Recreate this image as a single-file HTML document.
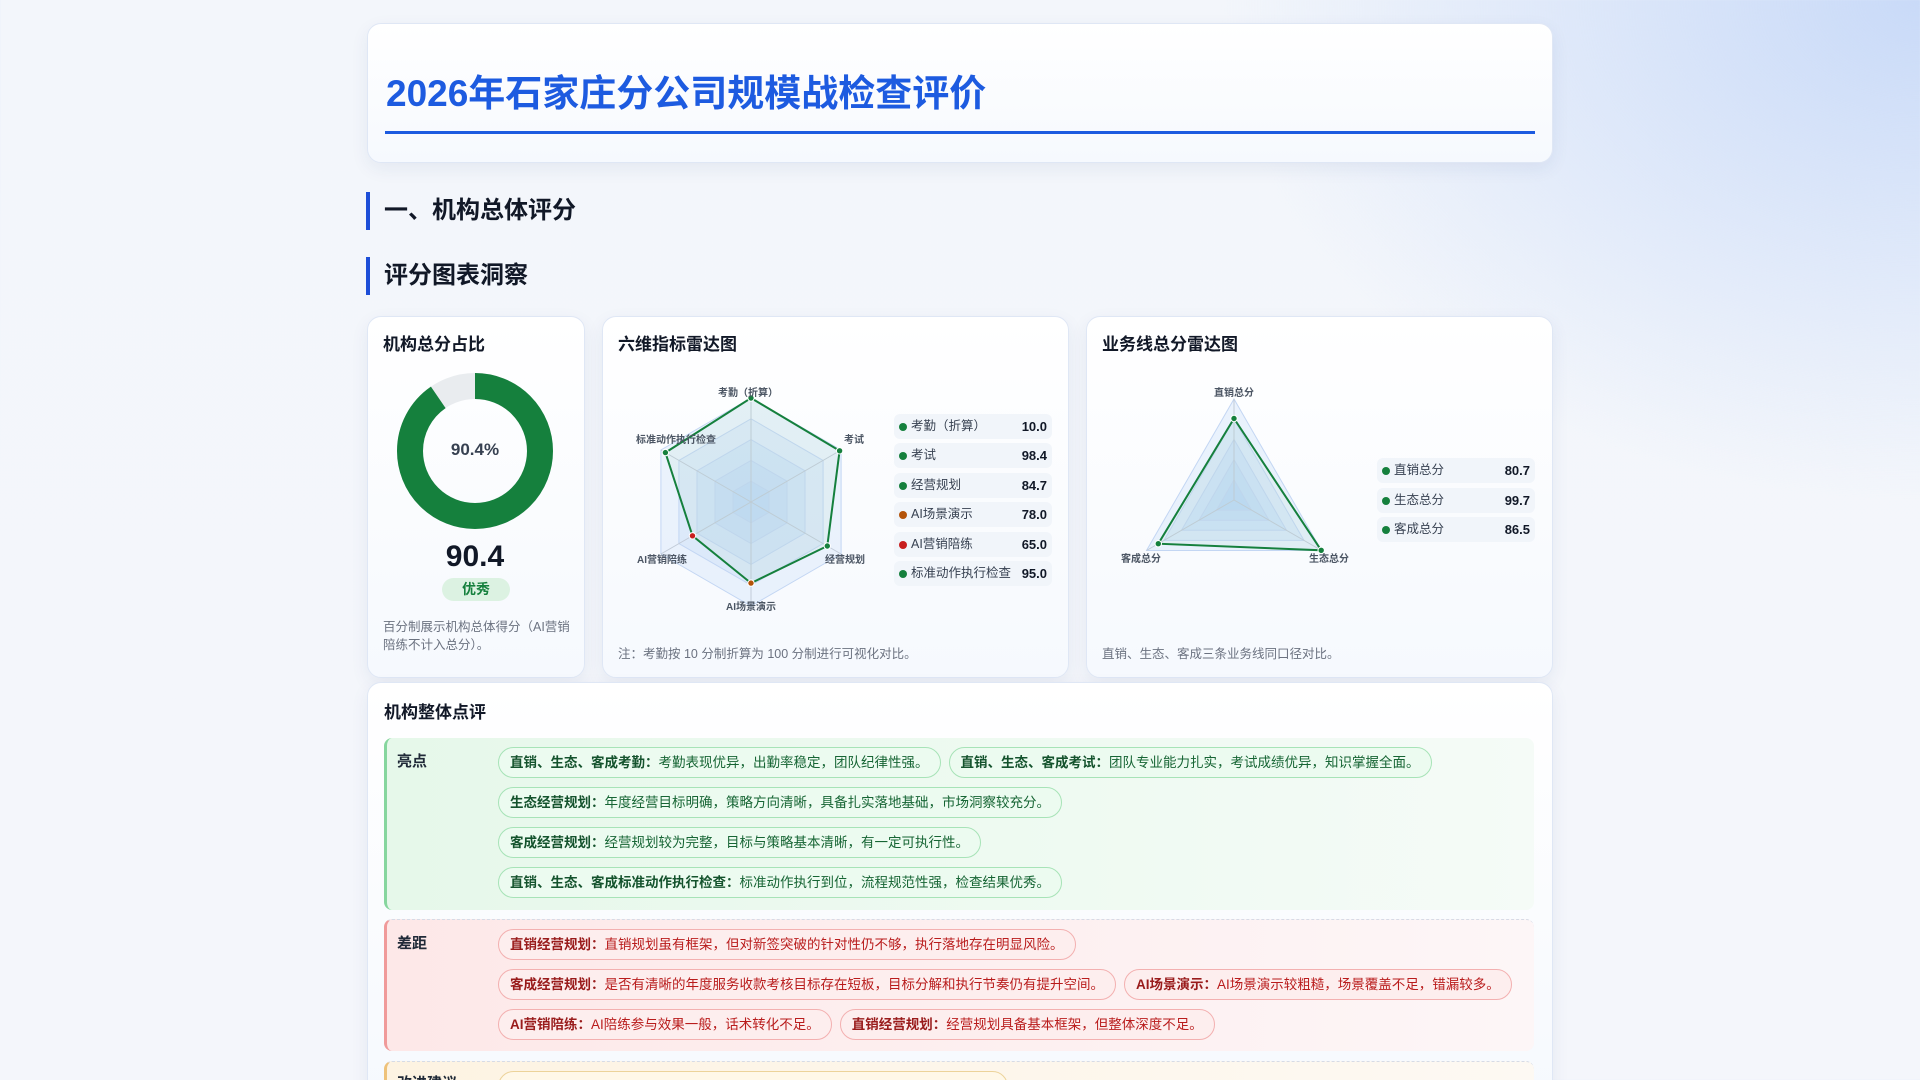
<!DOCTYPE html>
<html lang="zh">
<head>
<meta charset="utf-8">
<style>
*{margin:0;padding:0;box-sizing:border-box}
html,body{width:1920px;height:1080px;overflow:hidden}
body{font-family:"Liberation Sans","Noto Sans CJK SC",sans-serif;color:#1f2937;
background:radial-gradient(ellipse 700px 500px at 1920px 0px,#c9daf8 0%,rgba(201,218,248,0) 100%),linear-gradient(180deg,#f3f6fb 0%,#f4f6fb 100%);position:relative}
.abs{position:absolute}
.card{position:absolute;background:linear-gradient(180deg,#ffffff 0%,#f6f9fe 100%);border:1px solid #dfe7f5;border-radius:14px;box-shadow:0 6px 18px rgba(30,60,120,0.07)}
.ttl{position:absolute;font-size:17px;font-weight:bold;color:#111827}
.sec{position:absolute;left:366px;border-left:4px solid #1d4ed8;padding-left:14px;font-size:24px;font-weight:bold;color:#111827;height:38px;line-height:38px}
.leg{position:absolute;height:25px;background:#f1f5fa;border-radius:6px;font-size:12.5px;color:#374151;line-height:25px}
.leg i{position:absolute;left:5px;top:8.5px;width:8px;height:8px;border-radius:50%;background:#15803d}
.leg span{position:absolute;left:17px}
.leg b{position:absolute;right:5px;color:#111827;font-size:13px}
.note{position:absolute;font-size:12.5px;color:#6b7280;line-height:18px}
.blk{position:absolute;left:384px;width:1150px;border-radius:8px}
.lab{position:absolute;left:10px;font-size:15px;font-weight:bold;color:#1f2937}
.row{position:absolute;left:498px;display:flex;gap:8px}
.chip{height:31px;line-height:29px;border-radius:16px;padding:0 11px;font-size:13.5px;white-space:nowrap}
.g{background:#ecfbf0;border:1px solid #a7e3b7;color:#166534}
.g b{color:#14532d}
.r{background:#fdeeee;border:1px solid #f3b0b0;color:#b91c1c}
.r b{color:#991b1b}
.y{background:#fff8e8;border:1px solid #ecd39a;color:#92400e}
</style>
</head>
<body>

<div class="card" style="left:367px;top:23px;width:1186px;height:140px;"></div>
<div class="abs" style="left:386px;top:63px;font-size:37px;font-weight:bold;color:#1d5be0;">2026年石家庄分公司规模战检查评价</div>
<div class="abs" style="left:385px;top:131px;width:1150px;height:3px;background:#1d5be0;"></div>

<div class="sec" style="top:192px;">一、机构总体评分</div>
<div class="sec" style="top:257px;">评分图表洞察</div>

<div class="card" style="left:367px;top:316px;width:218px;height:362px;"></div>
<div class="ttl" style="left:383px;top:330px;">机构总分占比</div>
<svg class="abs" style="left:397px;top:373px" width="156" height="156" viewBox="0 0 156 156">
<circle cx="78" cy="78" r="65" fill="none" stroke="#e9ecef" stroke-width="26"/>
<circle cx="78" cy="78" r="65" fill="none" stroke="#15803d" stroke-width="26" stroke-dasharray="369.2 408.4" transform="rotate(-90 78 78)"/>
</svg>
<div class="abs" style="left:397px;top:440px;width:156px;text-align:center;font-size:17px;font-weight:bold;color:#374151;">90.4%</div>
<div class="abs" style="left:397px;top:540px;width:156px;text-align:center;font-size:30px;font-weight:bold;color:#111827;">90.4</div>
<div class="abs" style="left:442px;top:578px;width:68px;height:23px;border-radius:12px;background:#dcf2e2;color:#15803d;font-size:14px;font-weight:bold;text-align:center;line-height:23px;">优秀</div>
<div class="note" style="left:383px;top:618px;width:190px;">百分制展示机构总体得分（AI营销陪练不计入总分）。</div>

<div class="card" style="left:602px;top:316px;width:467px;height:362px;"></div>
<div class="ttl" style="left:618px;top:330px;">六维指标雷达图</div>
<div class="card" style="left:1086px;top:316px;width:467px;height:362px;"></div>
<div class="ttl" style="left:1102px;top:330px;">业务线总分雷达图</div>

<svg class="abs" style="left:0;top:0" width="1920" height="1080" viewBox="0 0 1920 1080">
<g transform="translate(751,502)">
<g fill="#a9cdf5" fill-opacity="0.2" stroke="#c3d6f3" stroke-width="1">
<polygon points="0,-104 90.1,-52 90.1,52 0,104 -90.1,52 -90.1,-52"/>
<polygon points="0,-83.2 72.1,-41.6 72.1,41.6 0,83.2 -72.1,41.6 -72.1,-41.6"/>
<polygon points="0,-62.4 54,-31.2 54,31.2 0,62.4 -54,31.2 -54,-31.2"/>
<polygon points="0,-41.6 36,-20.8 36,20.8 0,41.6 -36,20.8 -36,-20.8"/>
<polygon points="0,-20.8 18,-10.4 18,10.4 0,20.8 -18,10.4 -18,-10.4"/>
</g>
<g stroke="#c2cbd8" stroke-width="1">
<line x1="0" y1="0" x2="0" y2="-104"/><line x1="0" y1="0" x2="90.1" y2="-52"/><line x1="0" y1="0" x2="90.1" y2="52"/>
<line x1="0" y1="0" x2="0" y2="104"/><line x1="0" y1="0" x2="-90.1" y2="52"/><line x1="0" y1="0" x2="-90.1" y2="-52"/>
</g>
</g>
<polygon points="751,398 839.6,450.8 827.3,546 751,583.1 692.5,535.8 665.4,452.6" fill="#a8d8c0" fill-opacity="0.12" stroke="#15803d" stroke-width="2"/>
<g stroke="#fff" stroke-width="1">
<circle cx="751" cy="398" r="3.2" fill="#15803d"/><circle cx="839.6" cy="450.8" r="3.2" fill="#15803d"/>
<circle cx="827.3" cy="546" r="3.2" fill="#15803d"/><circle cx="751" cy="583.1" r="3.2" fill="#b45309"/>
<circle cx="692.5" cy="535.8" r="3.2" fill="#c81e1e"/><circle cx="665.4" cy="452.6" r="3.2" fill="#15803d"/>
</g>
<g font-family="Liberation Sans, Noto Sans CJK SC, sans-serif" font-size="10" font-weight="bold" fill="#4b5563">
<text x="748" y="396" text-anchor="middle">考勤（折算）</text>
<text x="854" y="443" text-anchor="middle">考试</text>
<text x="845" y="563" text-anchor="middle">经营规划</text>
<text x="751" y="610" text-anchor="middle">AI场景演示</text>
<text x="662" y="563" text-anchor="middle">AI营销陪练</text>
<text x="676" y="443" text-anchor="middle">标准动作执行检查</text>
</g>

<g transform="translate(1234,500)">
<g fill="#a9cdf5" fill-opacity="0.22" stroke="#c3d6f3" stroke-width="1">
<polygon points="0,-101 87.5,50.5 -87.5,50.5"/>
<polygon points="0,-80.8 70,40.4 -70,40.4"/>
<polygon points="0,-60.6 52.5,30.3 -52.5,30.3"/>
<polygon points="0,-40.4 35,20.2 -35,20.2"/>
<polygon points="0,-20.2 17.5,10.1 -17.5,10.1"/>
</g>
<g stroke="#c2cbd8" stroke-width="1">
<line x1="0" y1="0" x2="0" y2="-101"/><line x1="0" y1="0" x2="87.5" y2="50.5"/><line x1="0" y1="0" x2="-87.5" y2="50.5"/>
</g>
</g>
<polygon points="1234,418.5 1321.2,550.3 1158.3,543.7" fill="#a8d8c0" fill-opacity="0.12" stroke="#15803d" stroke-width="2"/>
<g stroke="#fff" stroke-width="1" fill="#15803d">
<circle cx="1234" cy="418.5" r="3.2"/><circle cx="1321.2" cy="550.3" r="3.2"/><circle cx="1158.3" cy="543.7" r="3.2"/>
</g>
<g font-family="Liberation Sans, Noto Sans CJK SC, sans-serif" font-size="10" font-weight="bold" fill="#4b5563">
<text x="1234" y="396" text-anchor="middle">直销总分</text>
<text x="1329" y="562" text-anchor="middle">生态总分</text>
<text x="1141" y="562" text-anchor="middle">客成总分</text>
</g>
</svg>

<div class="leg" style="left:894px;top:414px;width:158px;"><i></i><span>考勤（折算）</span><b>10.0</b></div>
<div class="leg" style="left:894px;top:443px;width:158px;"><i></i><span>考试</span><b>98.4</b></div>
<div class="leg" style="left:894px;top:473px;width:158px;"><i></i><span>经营规划</span><b>84.7</b></div>
<div class="leg" style="left:894px;top:502px;width:158px;"><i style="background:#b45309"></i><span>AI场景演示</span><b>78.0</b></div>
<div class="leg" style="left:894px;top:532px;width:158px;"><i style="background:#c81e1e"></i><span>AI营销陪练</span><b>65.0</b></div>
<div class="leg" style="left:894px;top:561px;width:158px;"><i></i><span>标准动作执行检查</span><b>95.0</b></div>
<div class="note" style="left:618px;top:645px;">注：考勤按 10 分制折算为 100 分制进行可视化对比。</div>

<div class="leg" style="left:1377px;top:458px;width:158px;"><i></i><span>直销总分</span><b>80.7</b></div>
<div class="leg" style="left:1377px;top:488px;width:158px;"><i></i><span>生态总分</span><b>99.7</b></div>
<div class="leg" style="left:1377px;top:517px;width:158px;"><i></i><span>客成总分</span><b>86.5</b></div>
<div class="note" style="left:1102px;top:645px;">直销、生态、客成三条业务线同口径对比。</div>

<div class="card" style="left:367px;top:682px;width:1186px;height:420px;"></div>
<div class="ttl" style="left:384px;top:698px;">机构整体点评</div>

<div class="blk" style="top:738px;height:172px;background:linear-gradient(90deg,#e6f8ea 0%,#f5fbf7 100%);border-left:3px solid #86d69e;">
<div class="lab" style="top:12px;">亮点</div>
</div>
<div class="row" style="top:747px;"><div class="chip g"><b>直销、生态、客成考勤：</b>考勤表现优异，出勤率稳定，团队纪律性强。</div><div class="chip g"><b>直销、生态、客成考试：</b>团队专业能力扎实，考试成绩优异，知识掌握全面。</div></div>
<div class="row" style="top:787px;"><div class="chip g"><b>生态经营规划：</b>年度经营目标明确，策略方向清晰，具备扎实落地基础，市场洞察较充分。</div></div>
<div class="row" style="top:827px;"><div class="chip g"><b>客成经营规划：</b>经营规划较为完整，目标与策略基本清晰，有一定可执行性。</div></div>
<div class="row" style="top:867px;"><div class="chip g"><b>直销、生态、客成标准动作执行检查：</b>标准动作执行到位，流程规范性强，检查结果优秀。</div></div>

<div class="blk" style="top:919px;height:132px;background:linear-gradient(90deg,#fde8e8 0%,#fdf6f7 100%);border-left:3px solid #f09a9a;border-top:1px dashed #d6dbe6;">
<div class="lab" style="top:12px;">差距</div>
</div>
<div class="row" style="top:929px;"><div class="chip r"><b>直销经营规划：</b>直销规划虽有框架，但对新签突破的针对性仍不够，执行落地存在明显风险。</div></div>
<div class="row" style="top:969px;"><div class="chip r"><b>客成经营规划：</b>是否有清晰的年度服务收款考核目标存在短板，目标分解和执行节奏仍有提升空间。</div><div class="chip r"><b>AI场景演示：</b>AI场景演示较粗糙，场景覆盖不足，错漏较多。</div></div>
<div class="row" style="top:1009px;"><div class="chip r"><b>AI营销陪练：</b>AI陪练参与效果一般，话术转化不足。</div><div class="chip r"><b>直销经营规划：</b>经营规划具备基本框架，但整体深度不足。</div></div>

<div class="blk" style="top:1061px;height:60px;background:linear-gradient(90deg,#fdf3e2 0%,#fdf9f3 100%);border-left:3px solid #eec27a;border-top:1px dashed #d6dbe6;">
<div class="lab" style="top:10px;">改进建议</div>
</div>
<div class="row" style="top:1071px;"><div class="chip y" style="width:510px;">&nbsp;</div></div>

</body>
</html>
